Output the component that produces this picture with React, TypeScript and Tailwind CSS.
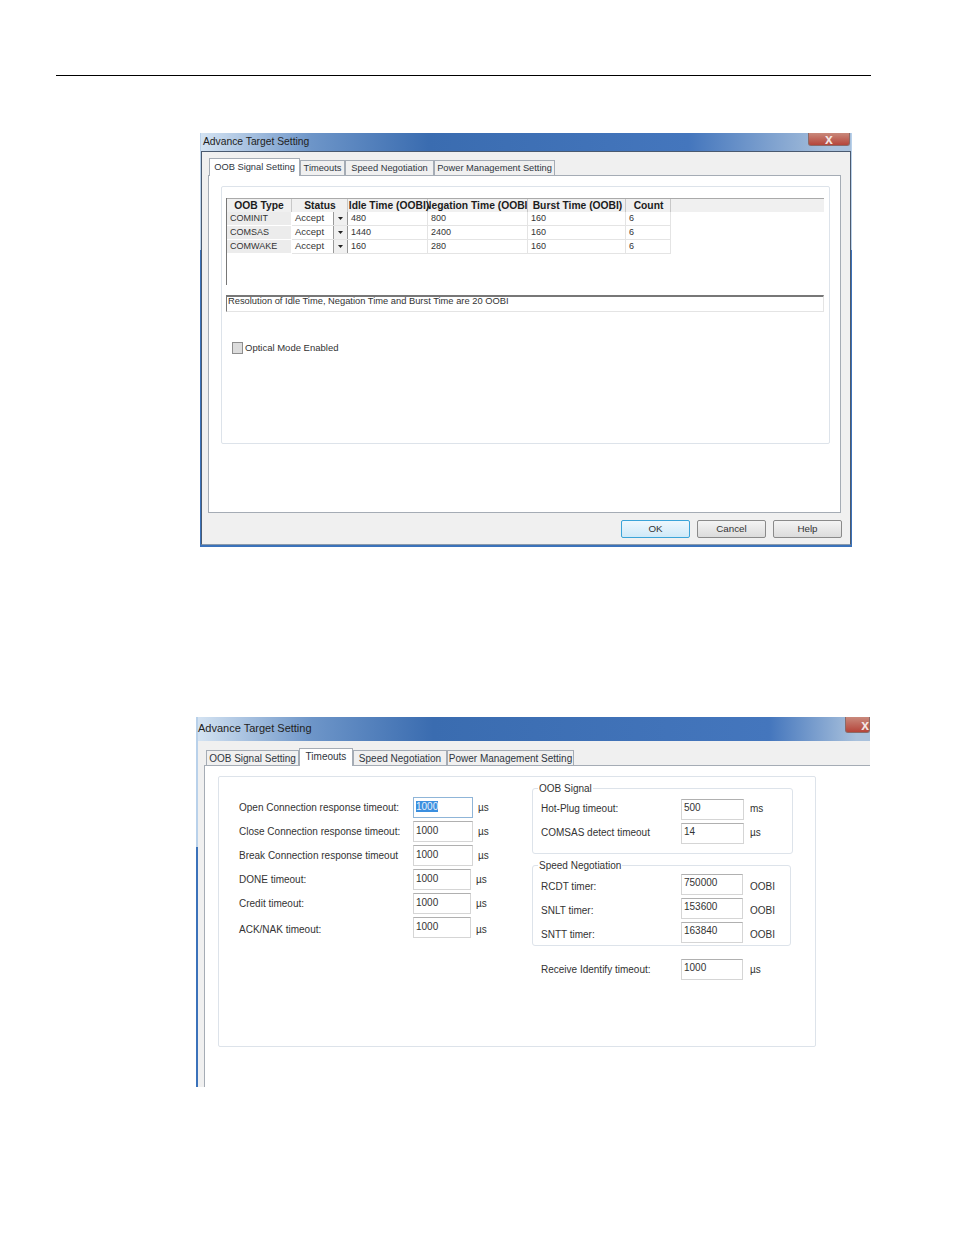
import React from "react";

const font = "font-['Liberation_Sans',Arial,sans-serif]";

const Tab = ({ label, w, active, big }: { label: string; w: string; active?: boolean; big?: boolean }) => (
  <div
    className={`${w} flex items-center justify-center whitespace-nowrap border border-[#a5acb5] text-[#2f3640] ${
      active
        ? `relative z-10 -mb-px h-[18px] self-end border-b-0 bg-white ${big ? "pb-[3px]" : "pb-0"}`
        : `h-[15px] border-b-0 bg-[#f0f0f0] ${big ? "" : "pt-px"}`
    } ${big ? "text-[10px]" : "text-[9.3px]"}`}
  >
    {label}
  </div>
);

const CloseBtn = ({ w, h, clipped }: { w: string; h: string; clipped?: boolean }) => (
  <div className={`${w} ${h} flex items-center ${clipped ? "justify-end" : "justify-center"} rounded-b-[3px] border border-t-0 border-[#8a6a68] bg-[linear-gradient(to_bottom,#c9897c,#b5453a)] text-[14px] leading-none font-bold text-[#f3e6e4]`}>
    x
  </div>
);

const rows = [
  ["COMINIT", "480", "800"],
  ["COMSAS", "1440", "2400"],
  ["COMWAKE", "160", "280"],
];

const Head = ({ w, pad, spill, children }: { w: string; pad?: string; spill?: boolean; children: React.ReactNode }) => (
  <div className={`${w} ${pad ?? ""} ${spill ? "overflow-visible" : "overflow-hidden"} flex h-[14px] items-center justify-center border-r border-[#c8c8c8] pb-px text-[10.3px] font-bold whitespace-nowrap text-[#1c1c1c]`}>
    {children}
  </div>
);

const Cell = ({ w, children }: { w: string; children: React.ReactNode }) => (
  <div className={`${w} flex h-[14px] items-center border-r border-b border-[#e4e4e4] pt-px pl-[3px] text-[9px] text-[#333]`}>
    {children}
  </div>
);

const Btn = ({ label, primary }: { label: string; primary?: boolean }) => (
  <div
    className={`flex h-[18px] w-[69px] items-center justify-center rounded-[2px] border text-[9.8px] text-[#333] ${
      primary
        ? "border-[#3ba3d8] bg-[linear-gradient(to_bottom,#eef7fd,#cfe9f8)]"
        : "border-[#8a8a8a] bg-[linear-gradient(to_bottom,#f4f4f4,#dcdcdc)]"
    }`}
  >
    {label}
  </div>
);

const FirstDialog = () => (
  <div className="ml-[200px] h-[414px] w-[652px] bg-[linear-gradient(to_bottom,#b9d1ea_0,#b9d1ea_117px,#3b72ba_117px,#3b72ba_100%)] px-px pb-[2px]">
    <div className="flex h-[18px] justify-between bg-[linear-gradient(to_right,#d4e3f2_0,#6d95c8_17%,#3a6cb0_35%,#4476bd_75%,#a9c1dc_97%)] pl-[2px]">
      <span className="text-[10.3px] leading-[17px] text-[#222]">Advance Target Setting</span>
      <div className="mr-px">
        <CloseBtn w="w-[42px]" h="h-[13px]" />
      </div>
    </div>
    <div className="flex h-[394px] flex-col border border-[#4a5a70] border-b-[#8a99aa] bg-[#f0f0f0] px-[6px] pt-[7px]">
      <div className="flex h-[16px] items-end pl-px">
        <Tab label="OOB Signal Setting" w="w-[91px]" active />
        <Tab label="Timeouts" w="w-[45px]" />
        <Tab label="Speed Negotiation" w="w-[89px]" />
        <Tab label="Power Management Setting" w="w-[121px]" />
      </div>
      <div className="h-[338px] w-[633px] border border-[#a5acb5] bg-white px-[12px] pt-[10px]">
        <div className="h-[258px] w-[609px] rounded-[2px] border border-[#dde3ea] px-[4px] pt-[11px]">
          <div className="h-[87px] w-[598px] border-l border-[#777]">
            <div className="flex h-[14px] border-t border-[#aaa] bg-[#f0f0f0]">
              <Head w="w-[65px]">OOB Type</Head>
              <Head w="w-[56px]" pad="pl-px">Status</Head>
              <Head w="w-[80px]" pad="pl-[3px]" spill>Idle Time (OOBI)</Head>
              <Head w="w-[100px]">Negation Time (OOBI)</Head>
              <Head w="w-[98px]" pad="pl-[2px]">Burst Time (OOBI)</Head>
              <Head w="w-[45px]" pad="pl-px">Count</Head>
            </div>
            {rows.map((r) => (
              <div key={r[0]} className="flex">
                <div className="flex h-[14px] w-[65px] items-center border-r border-b border-[#fff] bg-[#ececec] pt-px pl-[3px] text-[9px] text-[#333]">
                  {r[0]}
                </div>
                <div className="flex h-[14px] w-[56px] items-center justify-between border-b border-[#e4e4e4] pl-[3px] text-[9.5px] text-[#333]">
                  Accept
                  <div className="flex h-[13px] w-[15px] items-center justify-center border-r border-l border-[#9a9a9a] bg-[#f0f0f0]">
                    <svg width="5" height="3" viewBox="0 0 5 3">
                      <path d="M0 0h5L2.5 3z" fill="#222" />
                    </svg>
                  </div>
                </div>
                <Cell w="w-[80px]">{r[1]}</Cell>
                <Cell w="w-[100px]">{r[2]}</Cell>
                <Cell w="w-[98px]">160</Cell>
                <Cell w="w-[45px]">6</Cell>
              </div>
            ))}
          </div>
          <div className="mt-[10px] flex h-[17px] w-[598px] items-center border-t-2 border-r border-b border-l border-t-[#777] border-r-[#e4e4e4] border-b-[#e4e4e4] border-l-[#777] pb-[4px] pl-px text-[9.33px] text-[#333]">
            Resolution of Idle Time, Negation Time and Burst Time are 20 OOBI
          </div>
          <div className="mt-[29px] ml-[6px] flex items-center gap-[2px] text-[9.5px] text-[#333]">
            <div className="h-[12px] w-[11px] border border-[#8e8e8e] bg-[#dcdcdc]" />
            Optical Mode Enabled
          </div>
        </div>
      </div>
      <div className="mt-[7px] flex justify-end gap-[7px] pr-[2px]">
        <Btn label="OK" primary />
        <Btn label="Cancel" />
        <Btn label="Help" />
      </div>
    </div>
  </div>
);

const Input = ({ value, w, selected, low }: { value: string; w: string; selected?: boolean; low?: boolean }) => (
  <div className={`${w} ${low ? "leading-[18px]" : "leading-[16px]"} h-[21px] shrink-0 border pl-[2px] text-[10px] text-[#333] ${selected ? "border-[#8fb5d8]" : "border-[#d5d5d5] border-t-[#b0b0b0]"}`}>
    {selected ? <span className="bg-[#3a8fe0] text-[#e8f0fa]">{value}</span> : value}
  </div>
);

const leftRows = [
  ["Open Connection response timeout:", "w-[60px]", "pb-px"],
  ["Close Connection response timeout:", "w-[60px]", "pb-px"],
  ["Break Connection response timeout", "w-[60px]", "pb-px"],
  ["DONE timeout:", "w-[58px]", "pb-px"],
  ["Credit timeout:", "w-[58px]", "pb-px"],
  ["ACK/NAK timeout:", "w-[58px]", "pt-[4px]"],
];

type RowProps = {
  label: string;
  value: string;
  unit: string;
  sel?: boolean;
  low?: boolean;
  w: string;
  labelW: string;
  gap: string;
  labelPad?: string;
};

const FormRow = ({ label, value, unit, sel, low, w, labelW, gap, labelPad }: RowProps) => (
  <div className="flex h-[21px] items-center">
    <div className={`${labelW} ${labelPad ?? ""} shrink-0 text-[10px] whitespace-nowrap text-[#333]`}>{label}</div>
    <Input value={value} w={w} selected={sel} low={low} />
    <div className={`${gap} ${labelPad ?? ""} text-[10px] text-[#333]`}>{unit}</div>
  </div>
);

const Legend = ({ text, children, h, w, top }: { text: string; children: React.ReactNode; h: string; w: string; top: string }) => (
  <div className={`relative ${h} ${w} ${top} rounded-[3px] border border-[#dde3ea] pl-[8px]`}>
    <span className="absolute top-[-8px] left-[5px] bg-white px-px text-[10px] text-[#333]">{text}</span>
    {children}
  </div>
);

const SecondDialog = () => (
  <div className="ml-[196px] h-[370px] w-[674px] bg-[linear-gradient(to_bottom,#b9d1ea_0,#b9d1ea_130px,#3b72ba_130px,#3b72ba_100%)] pl-[2px]">
    <div className="flex h-[24px] justify-between bg-[linear-gradient(to_right,#d4e3f2_0,#6d95c8_17%,#3a6cb0_35%,#4476bd_85%,#a9c1dc_98%)] pl-0">
      <span className="text-[11px] leading-[22px] text-[#222]">Advance Target Setting</span>
      <CloseBtn w="w-[25px]" h="h-[16px]" clipped />
    </div>
    <div className="h-[346px] bg-[#f0f0f0] pt-[6px]">
      <div className="flex h-[18px] items-end pl-[8px]">
        <Tab label="OOB Signal Setting" w="w-[93px]" big />
        <Tab label="Timeouts" w="w-[54px]" active big />
        <Tab label="Speed Negotiation" w="w-[94px]" big />
        <Tab label="Power Management Setting" w="w-[127px]" big />
      </div>
      <div className="ml-[6px] h-[322px] border-t border-l border-[#a5acb5] bg-white pt-[10px] pl-[13px]">
        <div className="flex h-[271px] w-[598px] rounded-[2px] border border-[#dde3ea]">
          <div className="flex w-[313px] flex-col gap-[3px] pt-[20px] pl-[20px]">
            {leftRows.map(([label, w, pad], i) => (
              <FormRow key={label} label={label} value="1000" unit="µs" sel={i === 0} low w={w} labelW="w-[174px]" gap="ml-[5px]" labelPad={pad} />
            ))}
          </div>
          <div className="pt-[11px]">
            <Legend text="OOB Signal" h="h-[66px]" w="w-[261px]" top="pt-[10px]">
              <div className="flex flex-col gap-[3px]">
                <FormRow label="Hot-Plug timeout:" value="500" unit="ms" w="w-[63px]" labelW="w-[140px]" gap="ml-[6px]" labelPad="pb-[2px]" />
                <FormRow label="COMSAS detect timeout" value="14" unit="µs" w="w-[63px]" labelW="w-[140px]" gap="ml-[6px]" labelPad="pb-[2px]" />
              </div>
            </Legend>
            <div className="mt-[11px]">
              <Legend text="Speed Negotiation" h="h-[81px]" w="w-[259px]" top="pt-[8px]">
                <div className="flex flex-col gap-[3px]">
                  <FormRow label="RCDT timer:" value="750000" unit="OOBI" w="w-[62px]" labelW="w-[140px]" gap="ml-[7px]" labelPad="pt-[4px]" />
                  <FormRow label="SNLT timer:" value="153600" unit="OOBI" w="w-[62px]" labelW="w-[140px]" gap="ml-[7px]" labelPad="pt-[4px]" />
                  <FormRow label="SNTT timer:" value="163840" unit="OOBI" w="w-[62px]" labelW="w-[140px]" gap="ml-[7px]" labelPad="pt-[4px]" />
                </div>
              </Legend>
            </div>
            <div className="mt-[13px] pl-[9px]">
              <FormRow label="Receive Identify timeout:" value="1000" unit="µs" w="w-[62px]" labelW="w-[140px]" gap="ml-[7px]" />
            </div>
          </div>
        </div>
      </div>
    </div>
  </div>
);

export default function App() {
  return (
    <div className={`${font} h-[1235px] w-[954px] overflow-hidden bg-white pt-[75px]`}>
      <div className="ml-[56px] h-px w-[815px] bg-black" />
      <div className="mt-[57px]">
        <FirstDialog />
      </div>
      <div className="mt-[170px]">
        <SecondDialog />
      </div>
    </div>
  );
}
